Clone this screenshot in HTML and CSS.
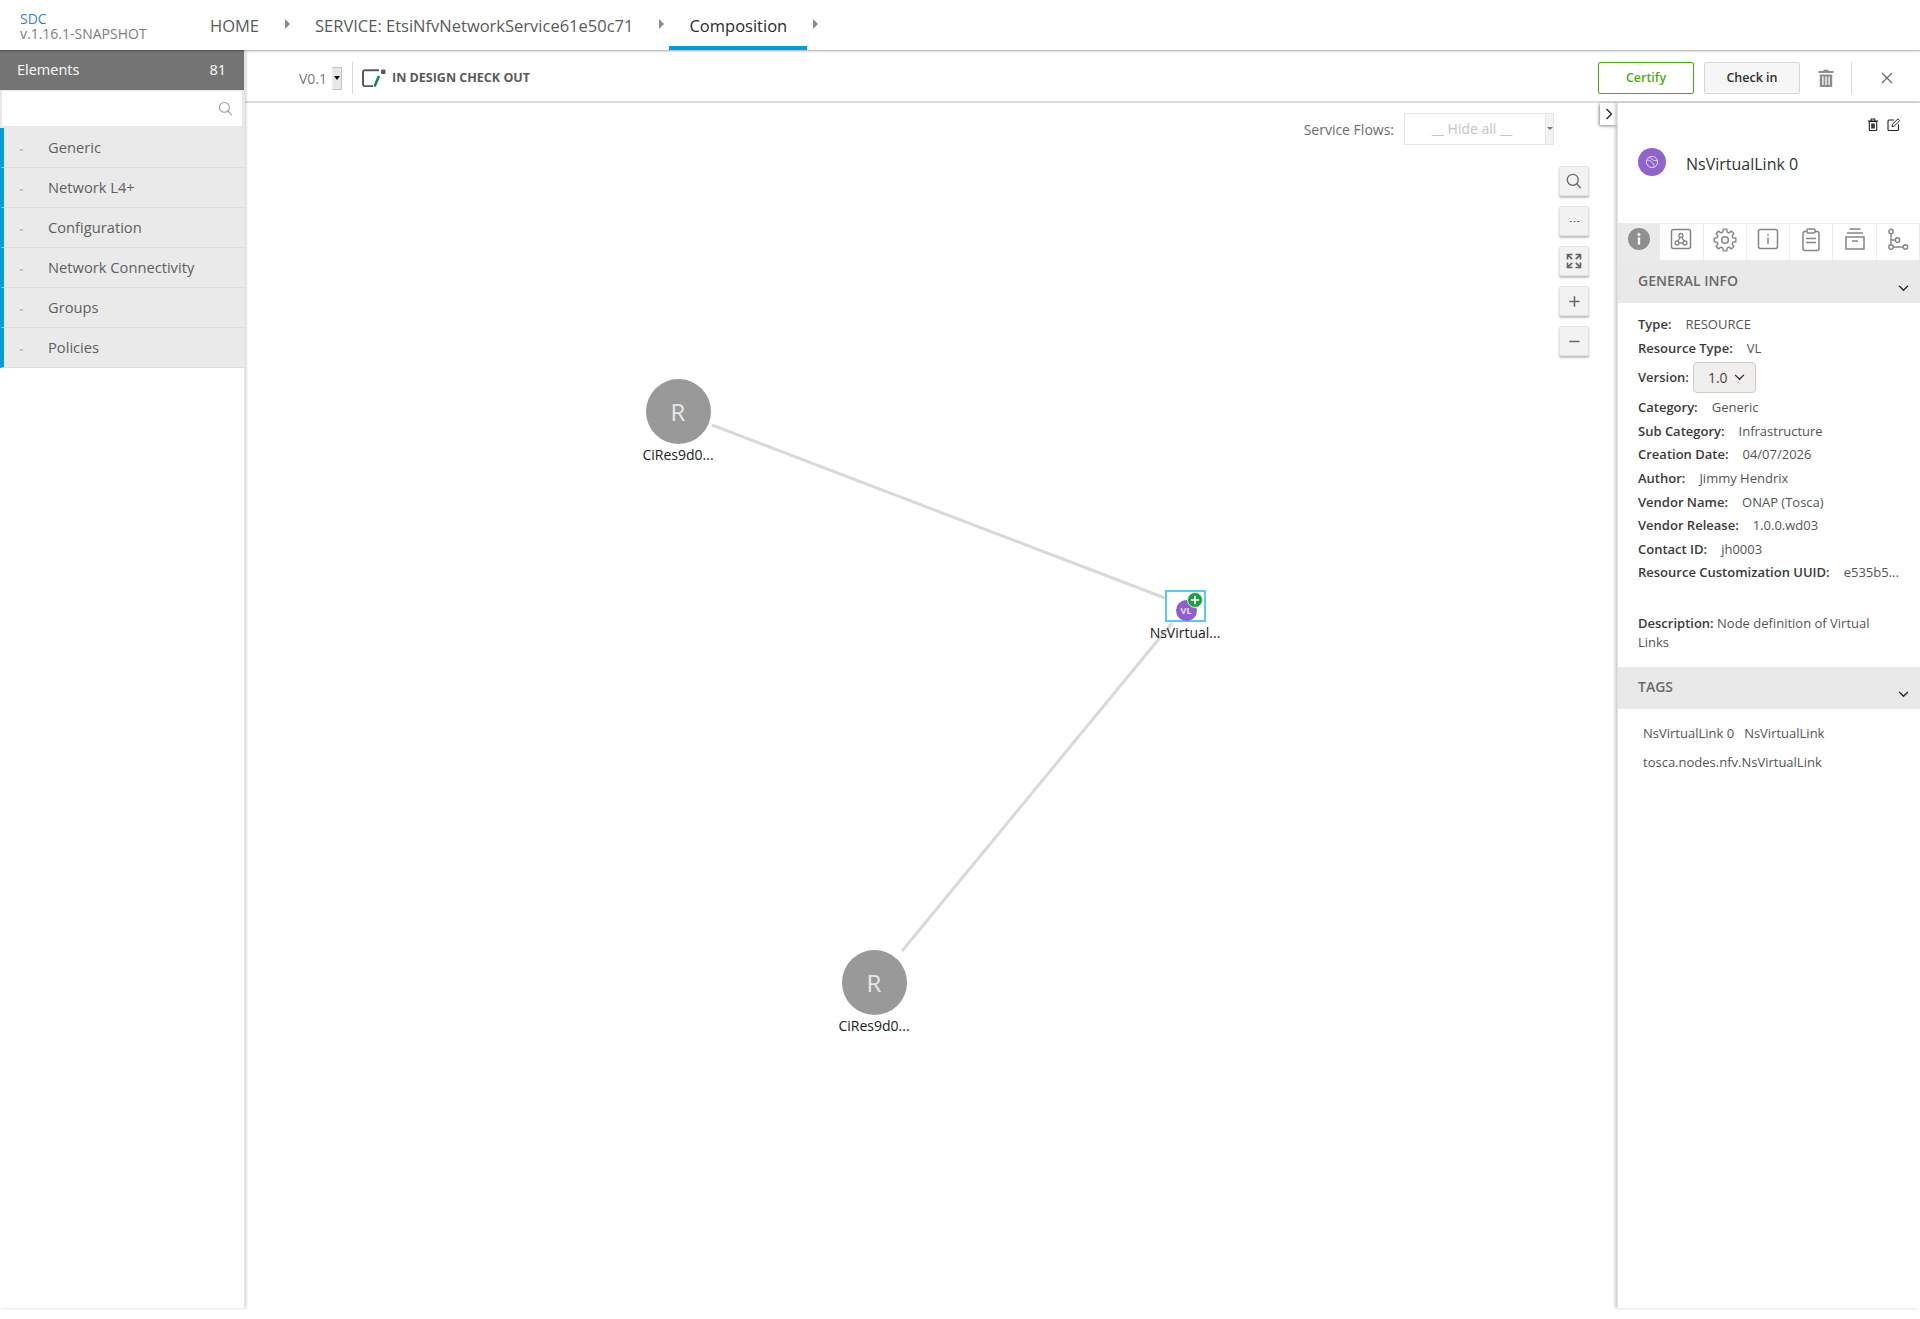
FILE: index.html
```html
<!DOCTYPE html>
<html>
<head>
<meta charset="utf-8">
<title>SDC Composition</title>
<link rel="stylesheet" href="styles.css">
</head>
<body>
<header class="topbar">
  <div class="brand"><div class="brand-name">SDC</div><div class="brand-version">v.1.16.1-SNAPSHOT</div></div>
  <nav class="crumbs">
    <a class="crumb">HOME</a><span class="crumb-arrow"></span>
    <a class="crumb">SERVICE: EtsiNfvNetworkService61e50c71</a><span class="crumb-arrow"></span>
    <a class="crumb active">Composition</a><span class="crumb-arrow"></span>
  </nav>
</header>
<div class="main">
  <aside class="sidebar">
    <div class="side-head"><span>Elements</span><span>81</span></div>
    <div class="side-search">
      <svg class="side-search-icon" viewBox="0 0 16 16" width="15" height="15"><circle cx="6.8" cy="6.8" r="5.3" fill="none" stroke="#9a9a9a" stroke-width="1.1"/><path d="M10.6 10.6l4 4.4" stroke="#9a9a9a" stroke-width="1.1" fill="none"/></svg>
    </div>
    <ul class="side-list">
      <li class="side-item"><span class="side-caret">⌄</span>Generic</li>
      <li class="side-item"><span class="side-caret">⌄</span>Network L4+</li>
      <li class="side-item"><span class="side-caret">⌄</span>Configuration</li>
      <li class="side-item"><span class="side-caret">⌄</span>Network Connectivity</li>
      <li class="side-item"><span class="side-caret">⌄</span>Groups</li>
      <li class="side-item"><span class="side-caret">⌄</span>Policies</li>
    </ul>
  </aside>
  <section class="content">
    <div class="toolbar">
      <span class="version">V0.1</span>
      <span class="mini-select"><i></i></span>
      <span class="tool-divider"></span>
      <svg class="status-icon" viewBox="0 0 24 18" width="24" height="18"><path d="M12 1.200H3a2 2 0 0 0-2 2v12a2 2 0 0 0 2 2h8" fill="none" stroke="#5a5a5a" stroke-width="2"/><path d="M12 1.200h5" fill="none" stroke="#5a5a5a" stroke-width="2"/><path d="M17 7l-4.500 10.500" stroke="#0f8a4a" stroke-width="2.600" fill="none"/><rect x="19" y="0.500" width="4.500" height="4.500" rx="1" fill="#5a5a5a"/></svg>
      <span class="status-text">IN DESIGN CHECK OUT</span>
      <span class="tool-spacer"></span>
      <button class="btn btn-certify">Certify</button>
      <button class="btn btn-checkin">Check in</button>
      <svg class="tool-trash" viewBox="0 0 16 18" width="16" height="18"><path d="M5.500 2V.8h5V2H15.500v2H.5V2z" fill="#8c8c8c"/><path fill-rule="evenodd" d="M1.800 5.500h12.400V18H1.800zM4.300 7.500v8.500h1.300V7.500zM7.300 7.500v8.500h1.400V7.500zM10.400 7.500v8.500h1.300V7.500z" fill="#8c8c8c"/></svg>
      <span class="tool-divider right"></span>
      <svg class="tool-close" viewBox="0 0 12 12" width="12" height="12"><path d="M1 1l10 10M11 1L1 11" stroke="#6a6a6a" stroke-width="1.300"/></svg>
    </div>
    <div class="work">
      <div class="canvas">
        <svg class="links" width="1372" height="1205" viewBox="0 0 1372 1205"><path d="M467 322L920 495" stroke="#d9d9d8" stroke-width="3"/><path d="M657 848L927 520" stroke="#d9d9d8" stroke-width="3"/></svg>
        <div class="node node-a"><div class="node-circle">R</div><div class="node-label">CiRes9d0...</div></div>
        <div class="node node-b"><div class="node-circle">R</div><div class="node-label">CiRes9d0...</div></div>
        <div class="node-vl">
          <div class="vl-box"><span class="vl-circle">VL</span>
            <svg class="vl-plus" viewBox="0 0 16 16" width="16" height="16"><circle cx="8" cy="8" r="7.500" fill="#1f9d3f" stroke="#d8f0de" stroke-width="1"/><path d="M8 3.800v8.400M3.800 8h8.400" stroke="#fff" stroke-width="1.600"/></svg>
          </div>
          <div class="node-label">NsVirtual...</div>
        </div>
        <div class="flows">
          <span class="flows-label">Service Flows:</span>
          <div class="flows-select"><span class="flows-value">__ Hide all __</span><span class="flows-arrow"></span></div>
        </div>
        <div class="zoom-tools">
          <button class="zoom-btn"><svg viewBox="0 0 16 16" width="16" height="16"><circle cx="6.800" cy="6.800" r="5.500" fill="none" stroke="#666" stroke-width="1.300"/><path d="M10.700 10.700l4 4.300" stroke="#666" stroke-width="1.300"/></svg></button>
          <button class="zoom-btn"><svg viewBox="0 0 16 16" width="15" height="15"><path d="M3 8h2M7 8h2M11 8h2" stroke="#666" stroke-width="1.200"/></svg></button>
          <button class="zoom-btn"><svg viewBox="0 0 16 16" width="16" height="16"><path d="M6.200 6.200L1.800 1.800M1.500 6.500V1.500H6.500M9.800 6.200l4.400-4.400M9.500 1.500h5V6.500M6.200 9.800l-4.400 4.400M1.500 9.500v5H6.500M9.800 9.800l4.400 4.400M14.500 9.500v5H9.500" fill="none" stroke="#666" stroke-width="1.700"/></svg></button>
          <button class="zoom-btn"><svg viewBox="0 0 16 16" width="15" height="15"><path d="M8 2.500v11M2.500 8h11" stroke="#666" stroke-width="1.600"/></svg></button>
          <button class="zoom-btn"><svg viewBox="0 0 16 16" width="15" height="15"><path d="M2.500 8h11" stroke="#666" stroke-width="1.600"/></svg></button>
        </div>
        <button class="collapse"><svg viewBox="0 0 8 12" width="8" height="12"><path d="M1.500 1l5 5-5 5" fill="none" stroke="#222" stroke-width="1.300"/></svg></button>
      </div>
      <aside class="panel">
        <div class="panel-actions">
          <svg viewBox="0 0 12 13" width="12" height="13"><path d="M2.300 3.500h7.400v8.300a.7.700 0 0 1-.7.700H3a.7.700 0 0 1-.7-.7zM.8 3h10.400M4.200 3V1h3.600v2" fill="none" stroke="#222" stroke-width="1.100"/><rect x="4.200" y="5.500" width="3.600" height="5" fill="#333"/></svg>
          <svg viewBox="0 0 13 13" width="13" height="13"><path d="M7 2H2a1 1 0 0 0-1 1v8.500a1 1 0 0 0 1 1h8.500a1 1 0 0 0 1-1V6.500" fill="none" stroke="#222" stroke-width="1.100"/><path d="M5 8.600l.5-2.300L10.800.9l1.800 1.800-5.300 5.400z" fill="none" stroke="#222" stroke-width="1"/></svg>
        </div>
        <div class="panel-title">
          <span class="title-icon"><svg viewBox="0 0 14 14" width="14" height="14"><circle cx="7" cy="7" r="5.600" fill="none" stroke="#e4d5f3" stroke-width="1"/><path d="M1.800 5C5 4.800 8.500 7.500 9.300 12M4.500 1.800C6 4 8 6 12.300 5.600" fill="none" stroke="#e4d5f3" stroke-width=".9"/></svg></span>
          <span class="title-text">NsVirtualLink 0</span>
        </div>
        <div class="tabs">
          <div class="tab active"><svg viewBox="0 0 22 22" width="22" height="22"><circle cx="11" cy="11" r="11" fill="#8f8f8f"/><rect x="9.800" y="9.500" width="2.400" height="7" fill="#fff"/><circle cx="11" cy="6.500" r="1.500" fill="#fff"/></svg></div>
          <div class="tab"><svg viewBox="0 0 22 22" width="22" height="22"><rect x="1.500" y="1.500" width="19" height="19" rx="2" fill="none" stroke="#858585" stroke-width="1.500"/><circle cx="11" cy="7.500" r="2" fill="none" stroke="#858585" stroke-width="1.300"/><circle cx="7" cy="15" r="2" fill="none" stroke="#858585" stroke-width="1.300"/><circle cx="15" cy="15" r="2" fill="none" stroke="#858585" stroke-width="1.300"/><path d="M10 9.500l-2 3.600M12 9.500l2 3.600M9 15h4" stroke="#858585" stroke-width="1.300"/></svg></div>
          <div class="tab"><svg viewBox="0 0 24 24" width="24" height="24"><path transform="translate(12 12)" d="M-2.260-7.880L-1.720-10.860L1.720-10.860L2.260-7.880L3.980-7.170L6.470-8.900L8.900-6.470L7.170-3.980L7.880-2.260L10.860-1.720L10.860 1.720L7.880 2.260L7.170 3.980L8.900 6.470L6.470 8.900L3.980 7.170L2.260 7.880L1.720 10.860L-1.720 10.860L-2.260 7.880L-3.980 7.170L-6.470 8.900L-8.900 6.470L-7.170 3.980L-7.880 2.260L-10.860 1.720L-10.860-1.720L-7.880-2.260L-7.170-3.980L-8.900-6.470L-6.470-8.900L-3.980-7.170Z" fill="none" stroke="#858585" stroke-width="1.400" stroke-linejoin="round"/><circle cx="12" cy="12" r="3.300" fill="none" stroke="#858585" stroke-width="1.500"/></svg></div>
          <div class="tab"><svg viewBox="0 0 22 22" width="22" height="22"><rect x="1.500" y="1.500" width="19" height="19" rx="2" fill="none" stroke="#858585" stroke-width="1.500"/><rect x="10.300" y="9.500" width="1.400" height="6.500" fill="#858585"/><rect x="10.300" y="6" width="1.400" height="1.600" fill="#858585"/></svg></div>
          <div class="tab"><svg viewBox="0 0 20 24" width="20" height="24"><rect x="2" y="3.500" width="16" height="19" rx="2" fill="none" stroke="#858585" stroke-width="1.500"/><rect x="6" y="1" width="8" height="4" rx="1" fill="#fff" stroke="#858585" stroke-width="1.500"/><path d="M5 10.500h10M5 14.500h10" stroke="#858585" stroke-width="1.500"/></svg></div>
          <div class="tab"><svg viewBox="0 0 22 22" width="22" height="22"><path d="M5.500 1h11M3 5h16" stroke="#858585" stroke-width="1.500"/><rect x="2" y="9" width="18" height="12" fill="none" stroke="#858585" stroke-width="1.500"/><path d="M8 13h6" stroke="#858585" stroke-width="1.500"/></svg></div>
          <div class="tab"><svg viewBox="0 0 22 24" width="22" height="24"><circle cx="4" cy="3.500" r="2.200" fill="none" stroke="#858585" stroke-width="1.400"/><circle cx="4" cy="19" r="2.200" fill="none" stroke="#858585" stroke-width="1.400"/><circle cx="10.500" cy="12" r="2.200" fill="none" stroke="#858585" stroke-width="1.400"/><circle cx="18.500" cy="19" r="2.200" fill="none" stroke="#858585" stroke-width="1.400"/><path d="M4 5.700v11M6.200 19h10M4 12h4.300" stroke="#858585" stroke-width="1.400" fill="none"/></svg></div>
        </div>
        <div class="section-head"><span>GENERAL INFO</span><svg viewBox="0 0 12 8" width="11" height="7"><path d="M1 1l5 5 5-5" fill="none" stroke="#222" stroke-width="1.600"/></svg></div>
        <div class="info">
          <div class="row"><b>Type:</b><span>RESOURCE</span></div>
          <div class="row"><b>Resource Type:</b><span>VL</span></div>
          <div class="row r-ver"><b>Version:</b><div class="ver-select">1.0<svg viewBox="0 0 12 8" width="11" height="7"><path d="M1 1l5 5 5-5" fill="none" stroke="#333" stroke-width="1.600"/></svg></div></div>
          <div class="row"><b>Category:</b><span>Generic</span></div>
          <div class="row"><b>Sub Category:</b><span>Infrastructure</span></div>
          <div class="row"><b>Creation Date:</b><span>04/07/2026</span></div>
          <div class="row"><b>Author:</b><span>Jimmy Hendrix</span></div>
          <div class="row"><b>Vendor Name:</b><span>ONAP (Tosca)</span></div>
          <div class="row"><b>Vendor Release:</b><span>1.0.0.wd03</span></div>
          <div class="row"><b>Contact ID:</b><span>jh0003</span></div>
          <div class="row"><b>Resource Customization UUID:</b><span>e535b5...</span></div>
          <p class="desc"><b>Description:</b> Node definition of Virtual Links</p>
        </div>
        <div class="section-head tags-head"><span>TAGS</span><svg viewBox="0 0 12 8" width="11" height="7"><path d="M1 1l5 5 5-5" fill="none" stroke="#222" stroke-width="1.600"/></svg></div>
        <div class="tags">
          <span>NsVirtualLink 0</span><span>NsVirtualLink</span><span>tosca.nodes.nfv.NsVirtualLink</span>
        </div>
      </aside>
    </div>
  </section>
</div>
</body>
</html>
```
FILE: styles.css
```css
* { box-sizing: border-box; }
html, body { margin: 0; padding: 0; height: 1319px; background: #fff; overflow: hidden; }
body { font-family: "Open Sans", sans-serif; color: #5a5a5a; }

.topbar { height: 50px; display: flex; align-items: stretch; background: #fff; box-shadow: 0 1px 2px rgba(0,0,0,.35); position: relative; z-index: 3; }
.brand { width: 190px; padding: 11px 0 0 20px; font-size: 14px; line-height: 15px; flex: none; }
.brand-name { color: #3f7fbf; }
.brand-version { color: #7d7d7d; }
.crumbs { display: flex; align-items: stretch; }
.crumb { font-size: 16.500px; color: #5a5a5a; padding: 0 20px; border-bottom: 4px solid transparent; white-space: nowrap; line-height: 52px; }
.crumb.active { color: #2a2a2a; font-weight: 500; border-bottom-color: #009fdb; }
.crumb-arrow { width: 0; height: 0; align-self: flex-start; margin: 19px 5px 0 6px; border-left: 5px solid #8c8c8c; border-top: 5px solid transparent; border-bottom: 5px solid transparent; }

.main { display: flex; height: 1258px; }
.sidebar { width: 245px; flex: none; border-right: 1px solid #e6e6e6; box-shadow: 1px 0 3px rgba(0,0,0,.2); position: relative; z-index: 2; background: #fff; }
.side-head { height: 40px; background: #747474; color: #fff; font-size: 14.500px; font-weight: 500; display: flex; justify-content: space-between; align-items: center; padding: 0 18px 2px 17px; }
.side-search { height: 38px; border: 2px solid #e8e8e8; border-top-width: 1px; display: flex; justify-content: flex-end; align-items: center; padding-right: 9px; }
.side-list { list-style: none; margin: 0; padding: 0; }
.side-item { height: 40px; background: #eaeaea; border-left: 4px solid #009fdb; border-bottom: 1px solid #dedede; font-size: 14.700px; font-weight: 500; line-height: 39px; color: #5f5f5f; display: flex; }
.side-caret { width: 44px; padding-left: 14px; font-size: 8px; color: #999; }

.content { flex: 1; display: flex; flex-direction: column; min-width: 0; }
.toolbar { height: 53px; flex: none; border-bottom: 2px solid #dcdcdc; display: flex; align-items: center; padding: 4px 27px 0 54px; }
.version { font-size: 14px; color: #7a7a7a; margin-top: 1px; }
.mini-select { width: 10px; height: 23px; margin: 1px 0 0 5px; background: #e8e8e8; border: 1px solid #c4c4c4; border-left-color: #eee; display: flex; align-items: center; justify-content: center; }
.mini-select i { width: 0; height: 0; border-top: 4px solid #111; border-left: 3px solid transparent; border-right: 3px solid transparent; }
.tool-divider { width: 1px; height: 32px; background: #d8d8d8; margin: 0 9px 0 10px; }
.status-icon { margin: 0 6px 0 0; }
.status-text { font-size: 12.500px; font-weight: 700; color: #5a5a5a; margin-top: -1px; }
.tool-spacer { flex: 1; }
.btn { width: 96px; height: 32px; font: 600 12.500px "Open Sans", sans-serif; border-radius: 2px; cursor: pointer; }
.btn-certify { background: #fff; color: #4ead0e; border: 1px solid #4ca90c; margin-right: 10px; }
.btn-checkin { background: #f6f6f6; color: #2d2d2d; border: 1px solid #d8d8d8; margin-right: 18px; }
.tool-divider.right { margin: 0 29px 0 17px; }

.work { flex: 1; display: flex; min-height: 0; }
.canvas { flex: 1; position: relative; min-width: 0; }
.links { position: absolute; left: 0; top: 0; }
.node { position: absolute; width: 90px; text-align: center; }
.node-a { left: 388px; top: 276px; }
.node-b { left: 584px; top: 847px; }
.node-circle { width: 65px; height: 65px; margin: 0 auto; border-radius: 50%; background: #999; color: #e8e8e8; font-size: 24px; line-height: 65px; }
.node-label { font-size: 14px; color: #222; line-height: 20px; margin-top: 1px; white-space: nowrap; }
.node-vl { position: absolute; left: 895px; top: 487px; width: 90px; text-align: center; }
.vl-box { position: relative; width: 41px; height: 32px; margin: 0 auto; border: 2px solid #5ac8f5; }
.vl-circle { position: absolute; left: 9px; top: 8px; width: 21px; height: 21px; border-radius: 50%; background: #8f5fcf; color: #e8def5; font-size: 9px; font-weight: 700; line-height: 21px; }
.vl-plus { position: absolute; right: 1px; top: 0; }
.flows { position: absolute; right: 63px; top: 10px; display: flex; align-items: center; gap: 10px; }
.flows-label { font-size: 14px; color: #6e6e6e; }
.flows-select { width: 150px; height: 32px; border: 1px solid #e6e6e6; position: relative; text-align: center; padding-right: 14px; font-size: 14px; line-height: 30px; color: #c4c4c4; }
.flows-arrow { position: absolute; right: 0; top: 0; width: 8px; height: 30px; background: #f2f2f2; border-left: 1px solid #e6e6e6; }
.flows-arrow::after { content: ""; position: absolute; left: 1px; top: 13px; border-top: 3px solid #777; border-left: 3px solid transparent; border-right: 3px solid transparent; }
.zoom-tools { position: absolute; right: 28px; top: 63px; display: flex; flex-direction: column; gap: 10px; }
.zoom-btn { width: 30px; height: 30px; padding: 0; background: #f2f2f2; border: 1px solid #e2e2e2; border-radius: 2px; box-shadow: 0 2px 2px rgba(0,0,0,.25); display: flex; align-items: center; justify-content: center; }
.collapse { position: absolute; right: 0; top: 0; width: 17px; height: 22px; padding: 0; background: #fff; border: 0; box-shadow: -1px 1px 3px rgba(0,0,0,.45); display: flex; align-items: center; justify-content: center; }

.panel { width: 303px; flex: none; background: #fff; border-left: 1px solid #e0e0e0; box-shadow: -2px 0 3px rgba(0,0,0,.2); position: relative; }
.panel-actions { height: 40px; display: flex; justify-content: flex-end; align-items: flex-start; gap: 8px; padding: 15px 20px 0 0; }
.panel-title { height: 80px; display: flex; align-items: flex-start; padding: 5px 0 0 20px; }
.title-icon { width: 28px; height: 28px; border-radius: 50%; background: #9063cd; display: flex; align-items: center; justify-content: center; }
.title-text { margin-left: 20px; font-size: 16px; color: #333; line-height: 32px; }
.tabs { height: 38px; display: flex; border-top: 1px solid #ececec; border-bottom: 1px solid #ececec; }
.tab { flex: 1; border-right: 1px solid #ececec; display: flex; justify-content: center; align-items: flex-start; padding-top: 4px; }
.tab.active { background: #eaeaea; border-right: 0; }
.section-head { height: 42px; background: #e9e9e9; display: flex; justify-content: space-between; padding: 10px 11px 0 20px; font-size: 14px; font-weight: 600; color: #6a6a6a; }
.section-head svg { margin-top: 14px; }
.info { height: 364px; padding: 9px 10px 0 20px; font-size: 13px; }
.row { height: 23.600px; line-height: 24px; color: #555; display: flex; gap: 14px; white-space: nowrap; }
.row b, .desc b { font-weight: 600; color: #3a3a3a; }
.r-ver { height: 36px; line-height: 36px; gap: 4px; }
.ver-select { width: 63px; height: 31px; margin-top: 3px; border: 1px solid #cfcbc6; border-radius: 4px; background: #f1efed; font-size: 14px; line-height: 29px; text-align: left; padding-left: 14px; display: flex; align-items: center; gap: 6px; color: #444; }
.desc { margin: 30px 0 0; line-height: 19px; color: #555; width: 262px; }
.tags { padding: 15px 0 0 25px; width: 290px; font-size: 13px; color: #555; display: flex; flex-wrap: wrap; column-gap: 10px; row-gap: 10px; line-height: 19px; }
```
